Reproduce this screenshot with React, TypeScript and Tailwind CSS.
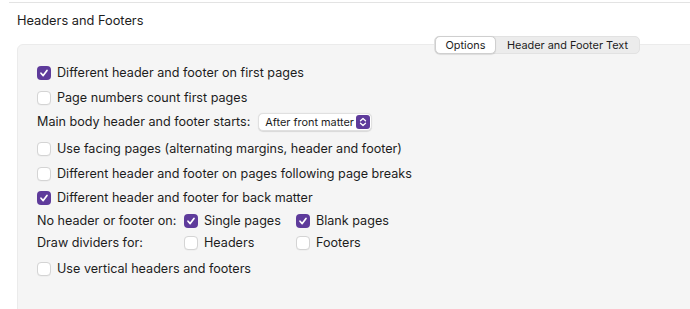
import React from "react";

const Check = ({ checked }: { checked?: boolean }) =>
  checked ? (
    <span className="flex h-[14px] w-[14px] shrink-0 items-center justify-center rounded-[4px] bg-[#5e3b9b]">
      <svg width="10" height="10" viewBox="0 0 10 10">
        <path d="M2 5.2 L4.2 7.6 L8 2.4" fill="none" stroke="white" strokeWidth="1.7" strokeLinecap="round" strokeLinejoin="round" />
      </svg>
    </span>
  ) : (
    <span className="h-[14px] w-[14px] shrink-0 rounded-[4px] border border-[#d4d4d4] bg-white shadow-[0_0.5px_0.5px_rgba(0,0,0,0.05)]" />
  );

const Row = ({ checked, label, mt }: { checked?: boolean; label: string; mt: string }) => (
  <div className={`flex h-[22px] items-center gap-[6px] whitespace-nowrap ${mt}`}>
    <Check checked={checked} />
    <span>{label}</span>
  </div>
);

export default function App() {
  return (
    <div
      className="relative h-[309px] w-[690px] overflow-hidden bg-white text-[12.6px] text-[#1d1d1d]"
      style={{ fontFamily: "Inter, 'Liberation Sans', sans-serif" }}
    >
      <div className="ml-[9px] mt-[2px] h-px bg-[#e3e3e3]" />
      <div className="ml-[17px] mt-[9px] h-[18px] whitespace-nowrap text-[12.8px] leading-[18px]">Headers and Footers</div>
      <div className="relative ml-[17px] mr-[-20px] mt-[14px] h-[300px] rounded-tl-[6px] border border-[#ebebeb] bg-[#f5f5f5] pl-[19px] pt-[17px]">
        <div className="absolute left-[416px] top-[-9px] flex h-[18px] items-center whitespace-nowrap rounded-[5px] border border-[#e2e2e2] bg-[#ececec] text-[10.9px]">
          <div className="flex h-[18px] w-[61px] items-center justify-center rounded-[5px] border border-[#cfcfcf] bg-white shadow-[0_0.5px_1px_rgba(0,0,0,0.1)]">
            Options
          </div>
          <div className="flex h-[18px] w-[143px] items-center justify-center">Header and Footer Text</div>
        </div>

        <Row checked label="Different header and footer on first pages" mt="mt-0" />
        <Row label="Page numbers count first pages" mt="mt-[3px]" />
        <div className="mt-[2px] flex h-[22px] items-center whitespace-nowrap">
          <span>Main body header and footer starts:</span>
          <div className="ml-[8px] flex h-[18px] w-[114px] shrink-0 items-center justify-between rounded-[5px] border border-[#e0e0e0] bg-white pl-[6px] pr-[1px] shadow-[0_0.5px_1px_rgba(0,0,0,0.12)]">
            <span className="text-[10.9px]">After front matter</span>
            <span className="flex h-[14px] w-[14px] items-center justify-center rounded-[3px] bg-[#5e3b9b]">
              <svg width="8" height="10" viewBox="0 0 8 10">
                <path d="M1.5 3.8 L4 1.5 L6.5 3.8 M1.5 6.2 L4 8.5 L6.5 6.2" fill="none" stroke="white" strokeWidth="1.3" strokeLinecap="round" strokeLinejoin="round" />
              </svg>
            </span>
          </div>
        </div>
        <Row label="Use facing pages (alternating margins, header and footer)" mt="mt-[5px]" />
        <Row label="Different header and footer on pages following page breaks" mt="mt-[3px]" />
        <Row checked label="Different header and footer for back matter" mt="mt-[2px]" />
        <div className="mt-[1px] flex h-[22px] items-center whitespace-nowrap">
          <span className="w-[147px]">No header or footer on:</span>
          <div className="flex w-[112px] items-center gap-[6px]">
            <Check checked />
            <span>Single pages</span>
          </div>
          <div className="flex items-center gap-[6px]">
            <Check checked />
            <span>Blank pages</span>
          </div>
        </div>
        <div className="mt-0 flex h-[22px] items-center whitespace-nowrap">
          <span className="w-[147px]">Draw dividers for:</span>
          <div className="flex w-[112px] items-center gap-[6px]">
            <Check />
            <span>Headers</span>
          </div>
          <div className="flex items-center gap-[6px]">
            <Check />
            <span>Footers</span>
          </div>
        </div>
        <Row label="Use vertical headers and footers" mt="mt-[4px]" />
      </div>
    </div>
  );
}
